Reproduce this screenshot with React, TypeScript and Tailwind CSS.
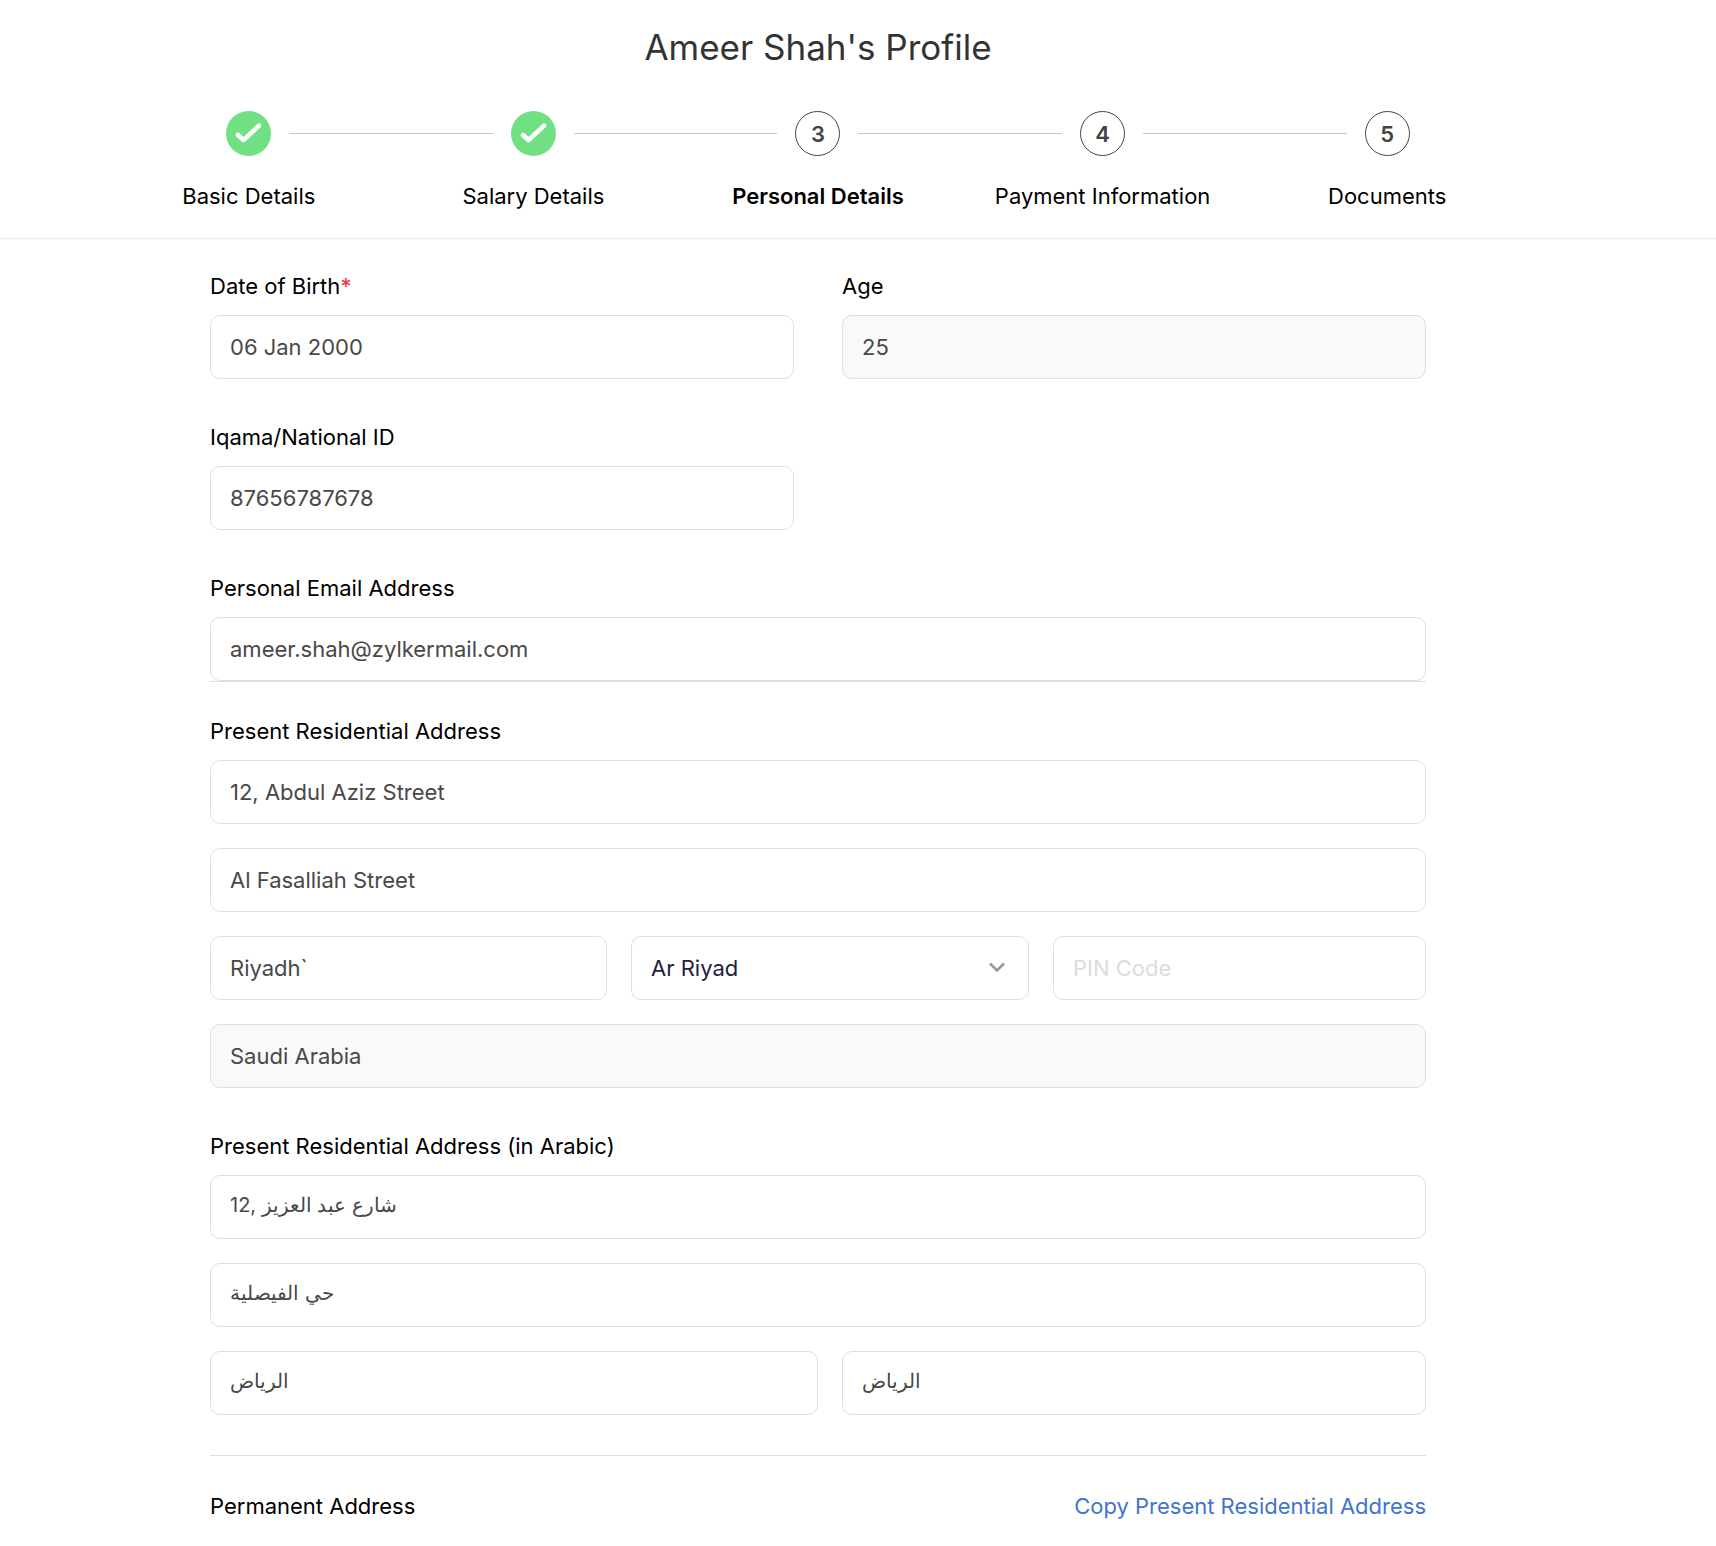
import { useState } from "react";
import type { InputHTMLAttributes, ReactNode } from "react";
import clsx from "clsx";

type Step = {
  label: string;
  status: "done" | "current" | "upcoming";
};

const steps: Step[] = [
  { label: "Basic Details", status: "done" },
  { label: "Salary Details", status: "done" },
  { label: "Personal Details", status: "current" },
  { label: "Payment Information", status: "upcoming" },
  { label: "Documents", status: "upcoming" },
];

const regions = ["Ar Riyad", "Makkah", "Al Madinah", "Al Qasim", "Asir"];

// Step marker: green tick when done, otherwise the step number
function StepMarker({ step, number }: { step: Step; number: number }) {
  if (step.status === "done") {
    return (
      <span className="flex size-[45px] shrink-0 items-center justify-center rounded-full bg-[#71e082]">
        <svg viewBox="0 0 45 45" className="size-[45px]" fill="none" aria-hidden="true">
          <path
            d="M12 24L17.5 29.2L33 14.6"
            stroke="white"
            strokeWidth="4.6"
            strokeLinecap="round"
            strokeLinejoin="round"
          />
        </svg>
      </span>
    );
  }
  return (
    <span className="flex size-[45px] shrink-0 items-center justify-center rounded-full border border-[#444] pt-0.5 text-[22px] font-semibold text-[#444]">
      {number}
    </span>
  );
}

function Stepper() {
  return (
    <ol className="mx-auto flex max-w-[1423px]">
      {steps.map((step, i) => (
        <li
          key={step.label}
          aria-current={step.status === "current" ? "step" : undefined}
          className="flex flex-1 flex-col"
        >
          <div className="flex items-center gap-[18px]">
            <span className={clsx("h-px flex-1", i > 0 && "bg-[#c8c8c8]")} />
            <StepMarker step={step} number={i + 1} />
            <span className={clsx("h-px flex-1", i < steps.length - 1 && "bg-[#c8c8c8]")} />
          </div>
          <span
            className={clsx(
              "mt-6 text-center text-[22px] leading-[33px]",
              step.status === "current" && "font-semibold"
            )}
          >
            {step.label}
          </span>
        </li>
      ))}
    </ol>
  );
}

function TextInput(props: InputHTMLAttributes<HTMLInputElement>) {
  return (
    <input
      type="text"
      {...props}
      className={clsx(
        "h-16 w-full min-w-0 rounded-[10px] border border-[#dfdfe1] bg-white px-[19px] text-[#484848] outline-none placeholder:text-[#dcdcdc] read-only:bg-[#f9f9f9] focus:border-blue-500",
        // Arabic glyphs run larger and sit lower than the Latin ones
        props.lang === "ar" ? "pb-1 text-[20px]" : "text-[22px]"
      )}
    />
  );
}

function Field({ id, label, children }: { id: string; label: ReactNode; children: ReactNode }) {
  return (
    <div>
      <label htmlFor={id} className="mb-3 block text-[22px] leading-[33px]">
        {label}
      </label>
      {children}
    </div>
  );
}

export default function App() {
  const [region, setRegion] = useState("Ar Riyad");

  return (
    <div className="min-h-screen bg-white font-['Inter','Liberation_Sans',sans-serif] text-black">
      {/* Header */}
      <header className="border-b border-[#ebebeb] pt-[25px] pr-20 pb-[25px]">
        <h1 className="mb-[42px] text-center text-[35px] leading-[44px] text-[#333]">
          Ameer Shah's Profile
        </h1>
        <Stepper />
      </header>

      <main className="pt-[31px] pr-20">
        <form className="mx-auto max-w-[1216px]" onSubmit={(e) => e.preventDefault()}>
          <div className="grid grid-cols-2 gap-x-12 gap-y-[42px]">
            <Field
              id="dob"
              label={
                <>
                  Date of Birth<span className="font-medium text-[#f0384b]">*</span>
                </>
              }
            >
              <TextInput id="dob" defaultValue="06 Jan 2000" required />
            </Field>
            <Field id="age" label="Age">
              <TextInput id="age" value="25" readOnly />
            </Field>
            <Field id="iqama" label="Iqama/National ID">
              <TextInput id="iqama" defaultValue="87656787678" />
            </Field>
            <div className="col-span-2 border-b border-[#dfdfe1]">
              <Field id="email" label="Personal Email Address">
                <TextInput id="email" type="email" defaultValue="ameer.shah@zylkermail.com" />
              </Field>
            </div>
          </div>

          {/* Present address */}
          <div className="mt-[33px] flex flex-col gap-6">
            <Field id="address1" label="Present Residential Address">
              <TextInput id="address1" defaultValue="12, Abdul Aziz Street" />
            </Field>
            <TextInput aria-label="Address line 2" defaultValue="Al Fasalliah Street" />
            <div className="grid grid-cols-[397fr_398fr_373fr] gap-6">
              <TextInput aria-label="City" defaultValue="Riyadh`" />
              <div className="relative">
                <select
                  aria-label="Region"
                  value={region}
                  onChange={(e) => setRegion(e.target.value)}
                  className="h-16 w-full appearance-none rounded-[10px] border border-[#dfdfe1] bg-white px-[19px] text-[22px] text-[#22223c] outline-none focus:border-blue-500"
                >
                  {regions.map((r) => (
                    <option key={r}>{r}</option>
                  ))}
                </select>
                <svg
                  viewBox="0 0 18 12"
                  className="pointer-events-none absolute top-[26px] right-[23px] h-3 w-[18px]"
                  fill="none"
                  aria-hidden="true"
                >
                  <path d="M2 1.5L9 8.5L16 1.5" stroke="#999" strokeWidth="2.6" />
                </svg>
              </div>
              <TextInput aria-label="PIN Code" placeholder="PIN Code" />
            </div>
            <TextInput aria-label="Country" value="Saudi Arabia" readOnly />
          </div>

          {/* Present address in Arabic */}
          <div className="mt-[42px] flex flex-col gap-6">
            <Field id="address-ar" label="Present Residential Address (in Arabic)">
              <TextInput id="address-ar" lang="ar" defaultValue="12, شارع عبد العزيز" />
            </Field>
            <TextInput lang="ar" aria-label="Address line 2 (in Arabic)" defaultValue="حي الفيصلية" />
            <div className="grid grid-cols-[608fr_584fr] gap-6">
              <TextInput lang="ar" aria-label="City (in Arabic)" defaultValue="الرياض" />
              <TextInput lang="ar" aria-label="Region (in Arabic)" defaultValue="الرياض" />
            </div>
          </div>

          {/* Permanent address */}
          <div className="mt-10 flex items-center justify-between border-t border-[#dfdfe1] pt-[34px]">
            <h2 className="text-[22px] leading-[33px]">Permanent Address</h2>
            <button type="button" className="text-[22px] leading-[33px] text-[#3f74cf]">
              Copy Present Residential Address
            </button>
          </div>
        </form>
      </main>
    </div>
  );
}
